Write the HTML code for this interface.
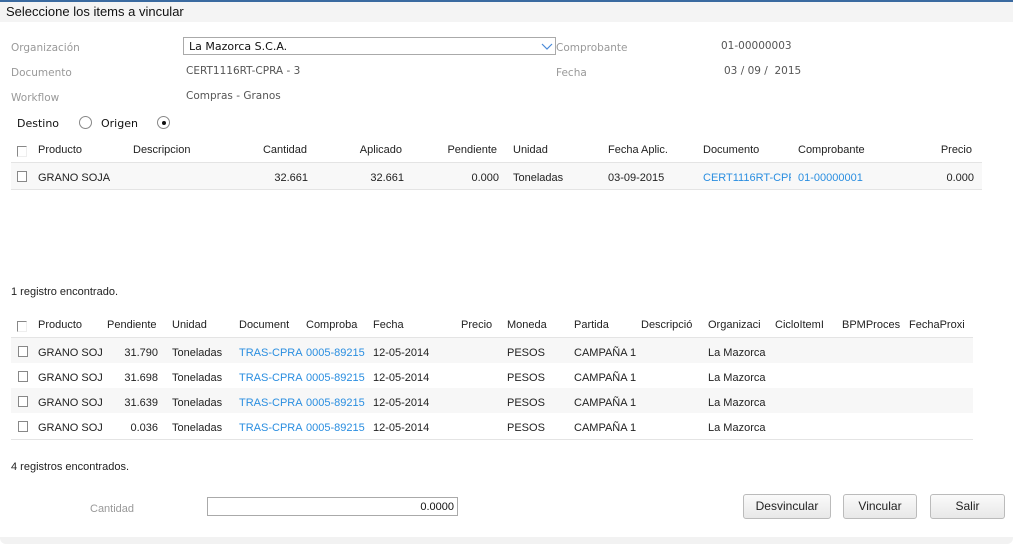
<!DOCTYPE html>
<html><head><meta charset="utf-8"><style>
*{margin:0;padding:0;box-sizing:border-box}
body{width:1013px;height:544px;background:#fff;position:relative;overflow:hidden;font-family:"Liberation Sans",sans-serif;font-size:11px;color:#222}
.a{position:absolute;white-space:nowrap}
.t{margin-top:1px}
.v{font-family:"DejaVu Sans",sans-serif;font-size:10.5px;color:#999}
.vd{font-family:"DejaVu Sans",sans-serif;font-size:10.5px;color:#555}
.l{color:#2a8ee0}
.r{text-align:right}
.cb{position:absolute;width:10px;height:11px;border:1px solid #888;background:#fff;margin-top:1px}
.btn{position:absolute;top:494px;height:25px;border:1px solid #bbb;border-radius:3px;background:linear-gradient(#fafafa,#e8e8e8);font-size:12px;text-align:center;line-height:23px;color:#222}
#w .a:not(.bar){margin-top:1px}
</style></head><body>
<div class="a" style="left:0;top:0;width:1013px;height:22px;background:#f4f4f4;border-top:2px solid #3a6aa0"></div>
<div class="a" style="left:6px;top:4px;font-size:13px;color:#111">Seleccione los items a vincular</div>
<div class="a" style="left:0;top:537px;width:1013px;height:7px;background:#f2f2f2;border-radius:0 0 6px 6px"></div>
<div id="w">
<div class="a v" style="left:11px;top:41px">Organización</div>
<div class="a bar" style="left:183px;top:37px;width:373px;height:18px;border:1px solid #aaa"></div>
<div class="a" style="left:189px;top:39px;font-family:'DejaVu Sans',sans-serif;font-size:11px;color:#111">La Mazorca S.C.A.</div>
<svg class="a" style="left:541px;top:42px" width="12" height="8"><path d="M1 1L6 6L11 1" fill="none" stroke="#4a8ad8" stroke-width="1.2"/></svg>
<div class="a v" style="left:556px;top:41px">Comprobante</div>
<div class="a vd" style="left:721px;top:39px">01-00000003</div>
<div class="a v" style="left:11px;top:66px">Documento</div>
<div class="a vd" style="left:186px;top:64px">CERT1116RT-CPRA - 3</div>
<div class="a v" style="left:556px;top:66px">Fecha</div>
<div class="a vd" style="left:724px;top:64px">03 / 09 /&nbsp; 2015</div>
<div class="a v" style="left:11px;top:91px">Workflow</div>
<div class="a vd" style="left:186px;top:89px">Compras - Granos</div>

<div class="a" style="left:17px;top:116px;font-family:'DejaVu Sans',sans-serif;font-size:11px;color:#111">Destino</div>
<div class="a bar" style="left:79px;top:116px;width:13px;height:13px;border:1px solid #888;border-radius:50%"></div>
<div class="a" style="left:101px;top:116px;font-family:'DejaVu Sans',sans-serif;font-size:11px;color:#111">Origen</div>
<div class="a bar" style="left:157px;top:116px;width:13px;height:13px;border:1px solid #888;border-radius:50%"></div>
<div class="a bar" style="left:161.5px;top:120.5px;width:4px;height:4px;background:#111;border-radius:50%"></div>

<div class="cb" style="left:17px;top:145px;border-right-color:#eee;border-bottom-color:#eee"></div>
<div class="a" style="left:38px;top:143px">Producto</div>
<div class="a" style="left:133px;top:143px">Descripcion</div>
<div class="a r" style="left:220px;width:87px;top:143px">Cantidad</div>
<div class="a r" style="left:320px;width:82px;top:143px">Aplicado</div>
<div class="a r" style="left:410px;width:87px;top:143px">Pendiente</div>
<div class="a" style="left:513px;top:143px">Unidad</div>
<div class="a" style="left:608px;top:143px">Fecha Aplic.</div>
<div class="a" style="left:703px;top:143px">Documento</div>
<div class="a" style="left:798px;top:143px">Comprobante</div>
<div class="a r" style="left:900px;width:72px;top:143px">Precio</div>
<div class="a bar" style="left:11px;top:162px;width:971px;height:28px;background:#f8f8f8;border-top:1px solid #e4e4e4;border-bottom:1px solid #e4e4e4"></div>
<div class="cb" style="left:17px;top:170px"></div>
<div class="a" style="left:38px;top:171px">GRANO SOJA</div>
<div class="a r" style="left:220px;width:88px;top:171px">32.661</div>
<div class="a r" style="left:320px;width:84px;top:171px">32.661</div>
<div class="a r" style="left:410px;width:89px;top:171px">0.000</div>
<div class="a" style="left:513px;top:171px">Toneladas</div>
<div class="a" style="left:608px;top:171px">03-09-2015</div>
<div class="a l" style="left:703px;top:171px;width:88px;overflow:hidden">CERT1116RT-CPR</div>
<div class="a l" style="left:798px;top:171px">01-00000001</div>
<div class="a r" style="left:900px;width:74px;top:171px">0.000</div>

<div class="a" style="left:11px;top:285px">1 registro encontrado.</div>

<div class="cb" style="left:17px;top:320px;border-right-color:#eee;border-bottom-color:#eee"></div>
<div class="a" style="left:38px;top:318px">Producto</div>
<div class="a" style="left:107px;top:318px">Pendiente</div>
<div class="a" style="left:172px;top:318px">Unidad</div>
<div class="a" style="left:239px;top:318px">Document</div>
<div class="a" style="left:306px;top:318px">Comproba</div>
<div class="a" style="left:373px;top:318px">Fecha</div>
<div class="a" style="left:461px;top:318px">Precio</div>
<div class="a" style="left:507px;top:318px">Moneda</div>
<div class="a" style="left:574px;top:318px">Partida</div>
<div class="a" style="left:641px;top:318px">Descripció</div>
<div class="a" style="left:708px;top:318px">Organizaci</div>
<div class="a" style="left:775px;top:318px">CicloItemI</div>
<div class="a" style="left:842px;top:318px">BPMProces</div>
<div class="a" style="left:909px;top:318px;width:58px;overflow:hidden">FechaProxi</div>
<div class="a bar" style="left:11px;top:337px;width:962px;height:1px;background:#e4e4e4"></div>
<div class="a bar" style="left:11px;top:338px;width:962px;height:25px;background:#f7f7f7"></div>
<div class="a bar" style="left:11px;top:388px;width:962px;height:25px;background:#f7f7f7"></div>
<div class="a bar" style="left:11px;top:439px;width:962px;height:1px;background:#e4e4e4"></div>

<div class="cb" style="left:18px;top:345px"></div><div class="a" style="left:38px;top:346px">GRANO SOJ</div><div class="a r" style="left:100px;width:58px;top:346px">31.790</div><div class="a" style="left:172px;top:346px">Toneladas</div><div class="a l" style="left:239px;top:346px">TRAS-CPRA</div><div class="a l" style="left:306px;top:346px">0005-89215</div><div class="a" style="left:373px;top:346px">12-05-2014</div><div class="a" style="left:507px;top:346px">PESOS</div><div class="a" style="left:574px;top:346px">CAMPAÑA 1</div><div class="a" style="left:708px;top:346px">La Mazorca</div>
<div class="cb" style="left:18px;top:370px"></div><div class="a" style="left:38px;top:371px">GRANO SOJ</div><div class="a r" style="left:100px;width:58px;top:371px">31.698</div><div class="a" style="left:172px;top:371px">Toneladas</div><div class="a l" style="left:239px;top:371px">TRAS-CPRA</div><div class="a l" style="left:306px;top:371px">0005-89215</div><div class="a" style="left:373px;top:371px">12-05-2014</div><div class="a" style="left:507px;top:371px">PESOS</div><div class="a" style="left:574px;top:371px">CAMPAÑA 1</div><div class="a" style="left:708px;top:371px">La Mazorca</div>
<div class="cb" style="left:18px;top:395px"></div><div class="a" style="left:38px;top:396px">GRANO SOJ</div><div class="a r" style="left:100px;width:58px;top:396px">31.639</div><div class="a" style="left:172px;top:396px">Toneladas</div><div class="a l" style="left:239px;top:396px">TRAS-CPRA</div><div class="a l" style="left:306px;top:396px">0005-89215</div><div class="a" style="left:373px;top:396px">12-05-2014</div><div class="a" style="left:507px;top:396px">PESOS</div><div class="a" style="left:574px;top:396px">CAMPAÑA 1</div><div class="a" style="left:708px;top:396px">La Mazorca</div>
<div class="cb" style="left:18px;top:420px"></div><div class="a" style="left:38px;top:421px">GRANO SOJ</div><div class="a r" style="left:100px;width:58px;top:421px">0.036</div><div class="a" style="left:172px;top:421px">Toneladas</div><div class="a l" style="left:239px;top:421px">TRAS-CPRA</div><div class="a l" style="left:306px;top:421px">0005-89215</div><div class="a" style="left:373px;top:421px">12-05-2014</div><div class="a" style="left:507px;top:421px">PESOS</div><div class="a" style="left:574px;top:421px">CAMPAÑA 1</div><div class="a" style="left:708px;top:421px">La Mazorca</div>

<div class="a" style="left:11px;top:460px">4 registros encontrados.</div>

<div class="a" style="left:90px;top:502px;color:#999">Cantidad</div>
<div class="a r bar" style="left:207px;top:497px;width:251px;height:19px;border:1px solid #aaa;padding:3px 3px;color:#111">0.0000</div>
</div>
<div class="btn" style="left:743px;width:88px">Desvincular</div>
<div class="btn" style="left:843px;width:74px">Vincular</div>
<div class="btn" style="left:930px;width:75px">Salir</div>
</body></html>
